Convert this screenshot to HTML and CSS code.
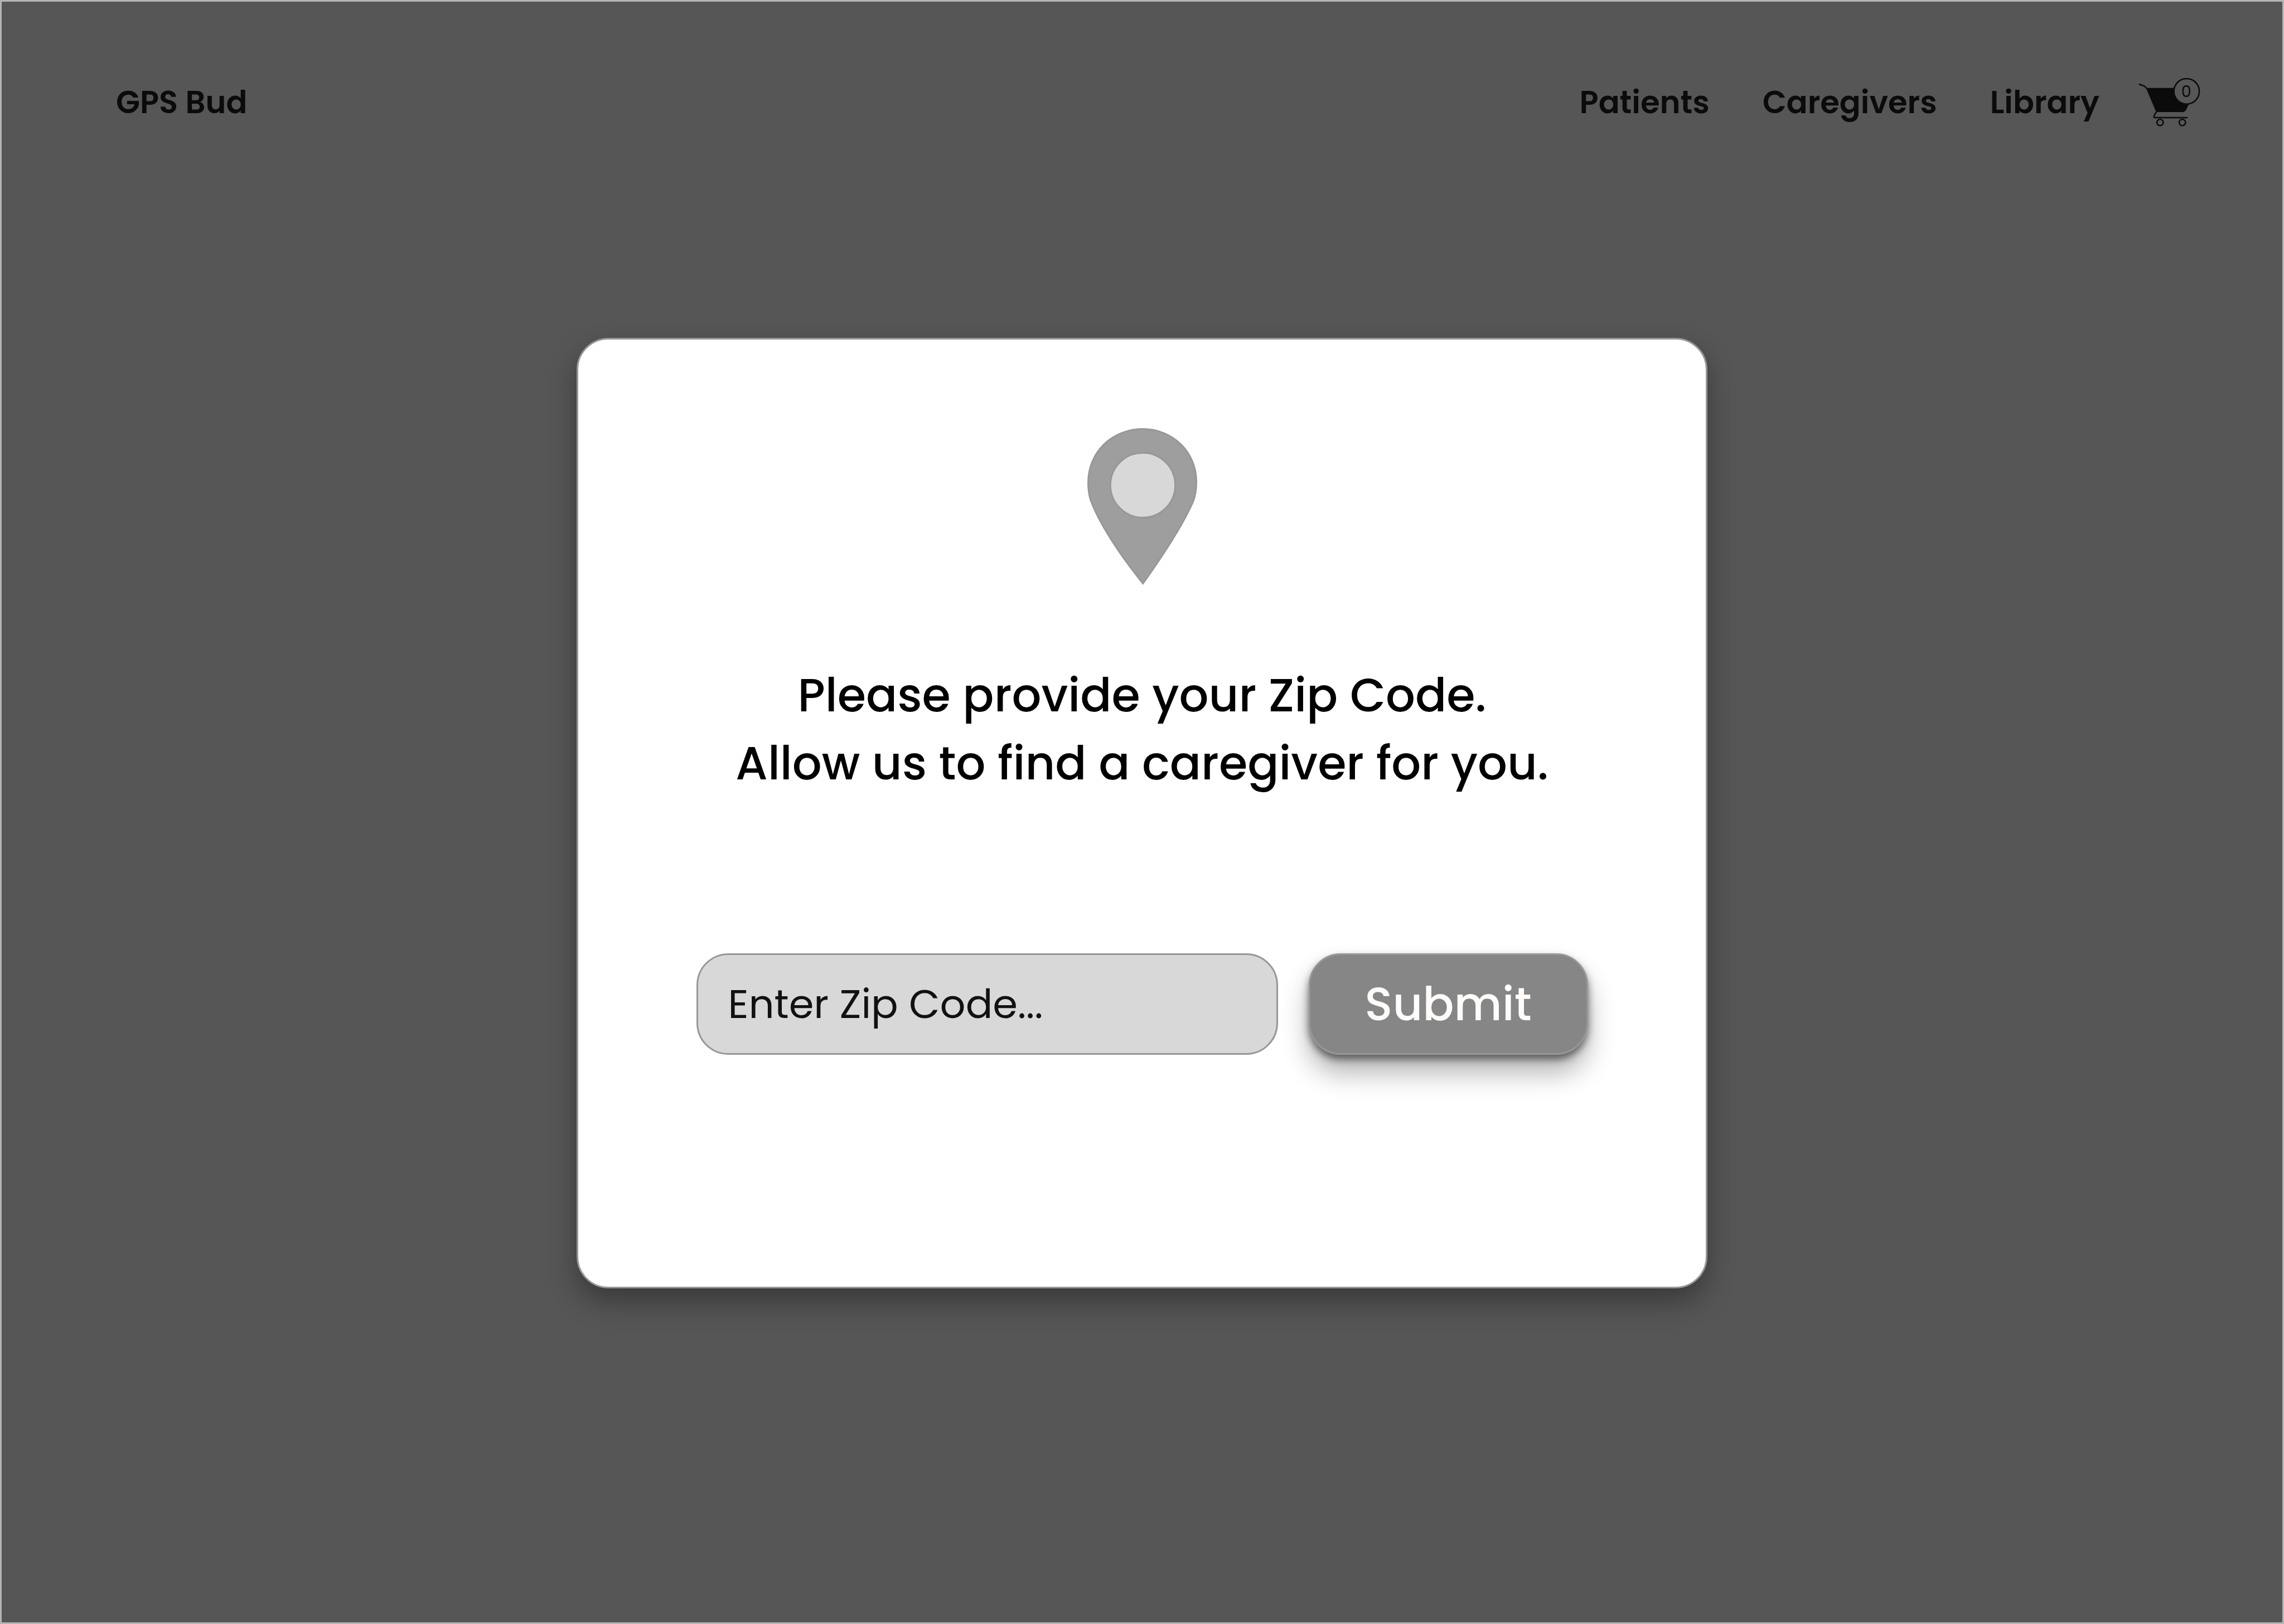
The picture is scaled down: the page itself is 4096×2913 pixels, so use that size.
FILE: index.html
```html
<!DOCTYPE html>
<html lang="en">
<head>
<meta charset="utf-8">
<meta name="viewport" content="width=device-width, initial-scale=1">
<title>GPS Bud</title>
<link rel="stylesheet" href="styles.css">
</head>
<body class="page">
  <header class="header">
    <a class="brand" href="#">GPS Bud</a>
    <div class="header-right">
      <nav class="nav">
        <a class="nav-link" href="#">Patients</a>
        <a class="nav-link" href="#">Caregivers</a>
        <a class="nav-link" href="#">Library</a>
      </nav>
      <a class="cart" href="#" aria-label="Cart">
        <svg class="cart-icon" viewBox="120 69 372 300">
          <path class="cart-basket" d="M184 142H360L418 226L400 263Q396 270 388 270H240Q236 268 234 260Z"/>
          <path class="cart-line" d="M141 117L166 126Q172 129 184 142"/>
          <path class="cart-line" d="M239 271Q229 283 223 299Q222 306 230 306H411"/>
          <circle class="cart-line" cx="258" cy="333" r="18"/>
          <circle class="cart-line" cx="384" cy="333" r="18"/>
          <circle class="cart-badge" cx="408" cy="157" r="72"/>
          <text class="cart-count" x="406" y="188">0</text>
        </svg>
      </a>
    </div>
  </header>
  <main class="main">
    <section class="card">
      <svg class="pin" viewBox="105 90 624 890" aria-hidden="true">
        <path class="pin-body" d="M420 94.500C590 94.500 724.500 225 724.500 395C724.500 437 718 480 704 512C645 645 530 820 421 973C290 810 170 630 121 492C113 462 109.500 430 109.500 400C109.500 225 245 94.500 420 94.500Z"/>
        <circle class="pin-hole" cx="420" cy="414" r="184"/>
      </svg>
      <h1 class="title">Please provide your Zip Code.<br>Allow us to find a caregiver for you.</h1>
      <form class="zip-form">
        <input class="zip-input" type="text" placeholder="Enter Zip Code..." aria-label="Zip Code">
        <button class="submit" type="button">Submit</button>
      </form>
    </section>
  </main>
</body>
</html>
```
FILE: styles.css
```css
* {
  box-sizing: border-box;
}

.page {
  display: flex;
  flex-direction: column;
  min-height: 100vh;
  margin: 0;
  border: 3px solid #b5b5b5;
  background: #565656;
  color: #0b0b0b;
  font-family: "Poppins", "Inter", sans-serif;
}

.header {
  display: flex;
  align-items: center;
  justify-content: space-between;
  padding: 133px 145px 48px 205px;
  font-size: 56px;
  font-weight: 600;
  line-height: 80px;
}

.brand,
.nav-link,
.cart {
  color: inherit;
  text-decoration: none;
}

.header-right,
.nav {
  display: flex;
  align-items: center;
}

.header-right {
  gap: 65px;
}

.nav {
  gap: 95px;
}

.cart,
.cart-icon {
  display: block;
}

.cart-icon {
  width: 118px;
  height: 95px;
}

.cart-basket {
  fill: #0b0b0b;
  stroke: #0b0b0b;
  stroke-width: 8;
  stroke-linejoin: round;
}

.cart-line {
  fill: none;
  stroke: #0b0b0b;
  stroke-width: 8;
  stroke-linecap: round;
}

.cart-badge {
  fill: #565656;
  stroke: #0b0b0b;
  stroke-width: 8;
}

.cart-count {
  fill: #0b0b0b;
  font-size: 90px;
  font-weight: 400;
  text-anchor: middle;
}

.main {
  display: flex;
  flex: 1;
  align-items: center;
  justify-content: center;
  padding-bottom: 272px;
}

.card {
  display: flex;
  flex-direction: column;
  align-items: center;
  width: 100%;
  max-width: 2028px;
  padding: 159px 48px 416px;
  border: 3px solid #979797;
  border-radius: 57px;
  background: #fff;
  box-shadow: 0 24px 50px rgba(0, 0, 0, 0.33);
}

.pin {
  width: 197px;
  height: 281px;
}

.pin-body {
  fill: #9e9e9e;
  stroke: #979797;
  stroke-width: 9;
}

.pin-hole {
  fill: #d8d8d8;
  stroke: #979797;
  stroke-width: 9;
}

.title {
  margin: 137px 0 280px;
  color: #000;
  font-size: 83px;
  font-weight: 500;
  line-height: 122px;
  text-align: center;
}

.zip-form {
  display: flex;
  align-items: center;
  justify-content: center;
  gap: 55px;
  width: 100%;
}

.zip-input,
.submit {
  height: 182px;
  border: 3px solid #979797;
  border-radius: 57px;
  font-family: inherit;
}

.zip-input {
  flex: 0 1 1043px;
  min-width: 0;
  padding: 0 54px;
  background: #d8d8d8;
  color: #111;
  font-size: 72px;
}

.zip-input::placeholder {
  color: #111;
  opacity: 1;
}

.submit {
  flex: 0 0 501px;
  background: #868686;
  color: #fffcfa;
  font-size: 83px;
  font-weight: 500;
  box-shadow: 0 32px 48px rgba(0, 0, 0, 0.3), 0 8px 14px rgba(0, 0, 0, 0.5);
}
```
